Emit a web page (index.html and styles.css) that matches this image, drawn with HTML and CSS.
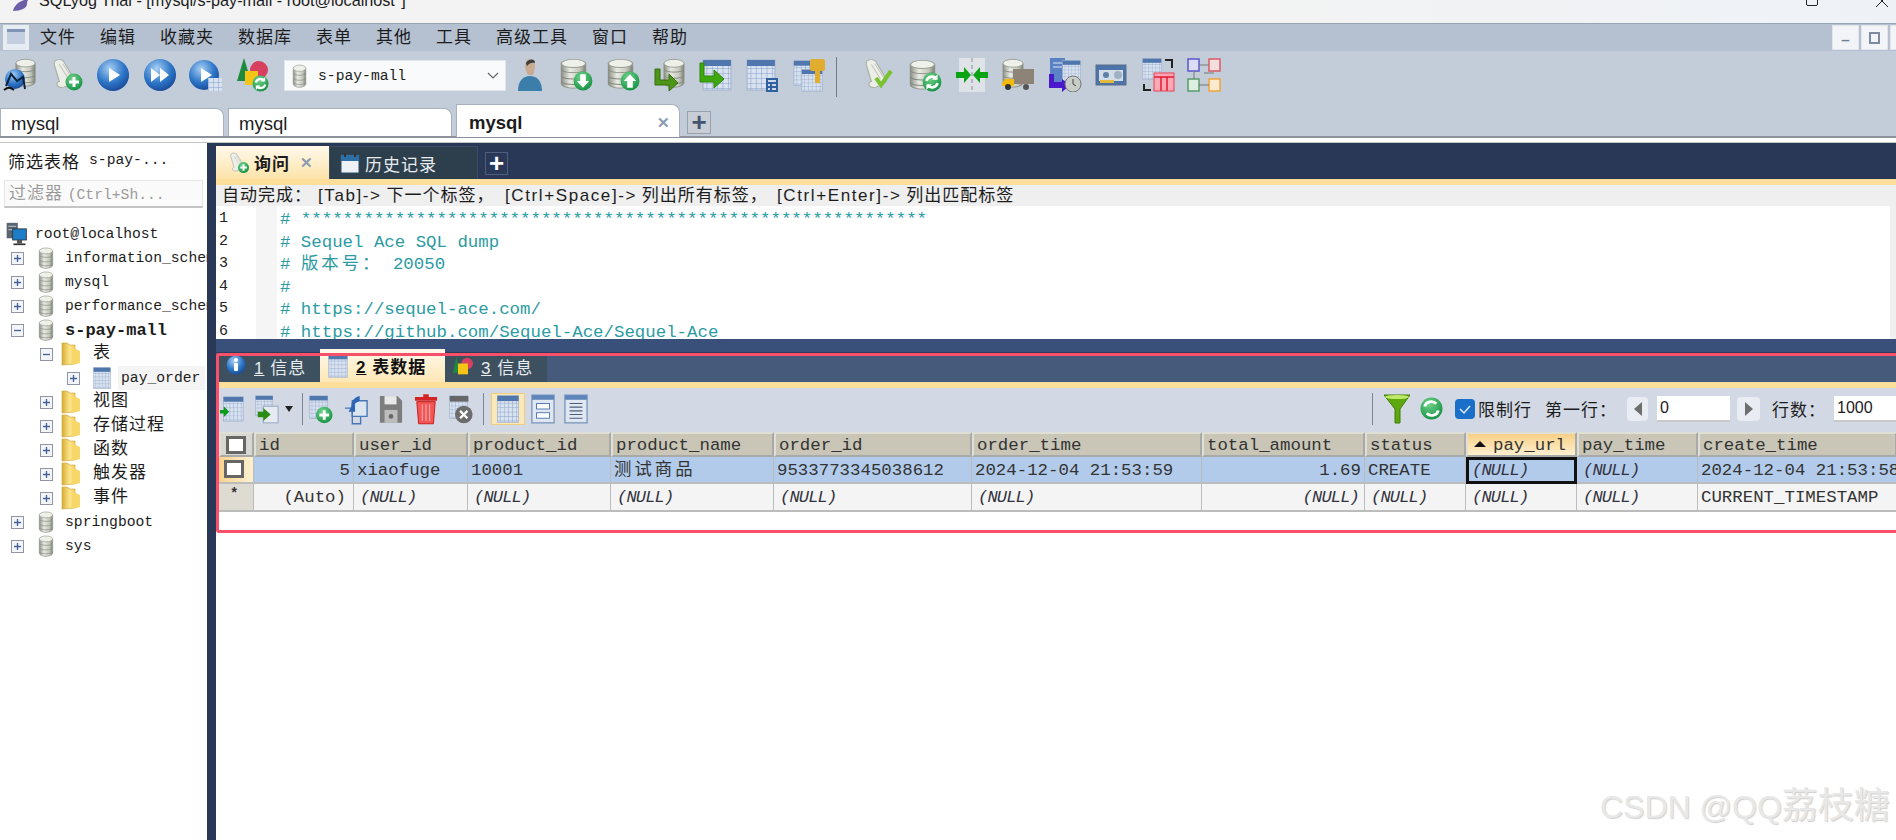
FILE: index.html
```html
<!DOCTYPE html>
<html lang="zh">
<head>
<meta charset="utf-8">
<title>SQLyog Trial</title>
<link rel="stylesheet" href="styles.css">
</head>
<body>
<svg class="sprite" xmlns="http://www.w3.org/2000/svg">
  <defs>
    <linearGradient id="gDb" x1="0" x2="1" y1="0" y2="0"><stop offset="0" stop-color="#8d9186"/><stop offset=".35" stop-color="#e9ebe4"/><stop offset=".75" stop-color="#c5c8bd"/><stop offset="1" stop-color="#7d8178"/></linearGradient>
    <radialGradient id="gBlue" cx=".4" cy=".3" r=".8"><stop offset="0" stop-color="#a8d0f4"/><stop offset=".55" stop-color="#2f77c8"/><stop offset="1" stop-color="#123f8c"/></radialGradient>
    <radialGradient id="gGreen" cx=".4" cy=".3" r=".8"><stop offset="0" stop-color="#6fd48a"/><stop offset="1" stop-color="#0e8a3c"/></radialGradient>
    <linearGradient id="gFolder" x1="0" x2="1" y1="0" y2="0"><stop offset="0" stop-color="#d8ae36"/><stop offset=".6" stop-color="#fbe58c"/><stop offset="1" stop-color="#f2cd57"/></linearGradient>
    <pattern id="pGrid" width="5" height="5" patternUnits="userSpaceOnUse"><rect width="5" height="5" fill="#d9e2f0"/><path d="M5 0V5M0 5H5" stroke="#86a0c8" stroke-width="1"/></pattern>

    <symbol id="db" viewBox="0 0 24 34" preserveAspectRatio="none"><path d="M2 6v22c0 3 5 5 10 5s10-2 10-5V6z" fill="url(#gDb)" stroke="#8b8f84"/><ellipse cx="12" cy="6" rx="10" ry="4.500" fill="#eef0ea" stroke="#9a9e93"/><path d="M2 13c2 4 18 4 20 0M2 20c2 4 18 4 20 0M2 26c2 4 18 4 20 0" fill="none" stroke="#85897e"/></symbol>
    <symbol id="tbl" viewBox="0 0 28 32" preserveAspectRatio="none"><rect x="1" y="1" width="26" height="30" fill="url(#pGrid)" stroke="#a4b4cc"/><rect x="1" y="1" width="26" height="6" fill="#4f76ad"/></symbol>
    <symbol id="scroll" viewBox="0 0 30 34" preserveAspectRatio="none"><path d="M8 2c4-1 6 1 7 4l8 16c1 3-1 5-3 6l-6 3c-3 1-5 0-6-2-1-2 1-4 2-4L6 9C5 6 5 3 8 2z" fill="#eceee8" stroke="#a9ada2"/><path d="M10 7l8 15M13 6l8 15" stroke="#c4c7bd" fill="none"/></symbol>
    <symbol id="plus" viewBox="0 0 18 18"><circle cx="9" cy="9" r="8.500" fill="url(#gGreen)"/><path d="M9 4v10M4 9h10" stroke="#fff" stroke-width="3"/></symbol>
    <symbol id="down" viewBox="0 0 18 18"><circle cx="9" cy="9" r="8.500" fill="url(#gGreen)"/><path d="M6.500 3h5v6h3L9 15 3.500 9h3z" fill="#fff"/></symbol>
    <symbol id="up" viewBox="0 0 18 18"><circle cx="9" cy="9" r="8.500" fill="url(#gGreen)"/><path d="M6.500 15h5V9h3L9 3 3.500 9h3z" fill="#fff"/></symbol>
    <symbol id="sync" viewBox="0 0 18 18"><circle cx="9" cy="9" r="8.500" fill="url(#gGreen)"/><path d="M4 8c1-4 6-5 9-2M14 10c-1 4-6 5-9 2" stroke="#fff" stroke-width="2.400" fill="none"/><path d="M14 2v5H9zM4 16v-5h5z" fill="#fff"/></symbol>

    <symbol id="i-connect" viewBox="0 0 34 34"><use href="#db" x="11" y="0" width="23" height="29"/><circle cx="12" cy="21" r="10" fill="url(#gBlue)"/><path d="M3 28l5-12 6 7 6-4 2 12" fill="none" stroke="#0c2340" stroke-width="2"/><path d="M1 32c4-3 6-3 10 0" stroke="#111" stroke-width="2" fill="none"/></symbol>
    <symbol id="i-newq" viewBox="0 0 34 34"><use href="#scroll" x="-2" y="0" width="34" height="32"/><use href="#plus" x="15" y="15" width="18" height="18"/></symbol>
    <symbol id="i-run" viewBox="0 0 34 34"><circle cx="17" cy="17" r="16" fill="url(#gBlue)"/><path d="M13 10l11 7-11 7z" fill="#fff"/></symbol>
    <symbol id="i-runall" viewBox="0 0 34 34"><circle cx="17" cy="17" r="16" fill="url(#gBlue)"/><path d="M8 10l9 7-9 7zM17 10l9 7-9 7z" fill="#fff"/></symbol>
    <symbol id="i-runtb" viewBox="0 0 34 34"><circle cx="15" cy="17" r="15" fill="url(#gBlue)"/><path d="M12 10l11 7-11 7z" fill="#fff"/><rect x="19" y="20" width="14" height="13" fill="url(#pGrid)"/></symbol>
    <symbol id="i-shapes" viewBox="0 0 34 34"><path d="M8 0l7 23H1z" fill="#1f8a3c"/><circle cx="23" cy="12" r="9" fill="#d8405f"/><rect x="9" y="13" width="13" height="14" fill="#f4c518"/><use href="#sync" x="16" y="17" width="17" height="17"/></symbol>
    <symbol id="i-user" viewBox="0 0 34 34"><path d="M14 2c5-2 9 1 8 6l-1 7c-1 3-6 3-7 0-2-4-3-9 0-13z" fill="#c9ab92"/><path d="M13 5c2-4 9-5 9 0-3-1-6 0-8 3z" fill="#3c3c3c"/><path d="M5 33c0-10 5-15 12-15s12 5 12 15z" fill="#3b7eaa"/></symbol>
    <symbol id="i-dbdown" viewBox="0 0 34 34"><use href="#db" x="0" y="0" width="29" height="31"/><use href="#down" x="14" y="13" width="20" height="20"/></symbol>
    <symbol id="i-dbup" viewBox="0 0 34 34"><use href="#db" x="0" y="0" width="29" height="31"/><use href="#up" x="14" y="13" width="20" height="20"/></symbol>
    <symbol id="i-imp" viewBox="0 0 34 34"><use href="#db" x="10" y="0" width="24" height="30"/><path d="M3 11h5v11h9v-6l9 9-9 8v-6H3z" fill="#4c9618" stroke="#356f0e"/></symbol>
    <symbol id="i-imptb" viewBox="0 0 34 34"><use href="#tbl" x="3" y="1" width="30" height="32"/><path d="M1 5h4v13h10v-6l10 9-10 9v-6H1z" fill="#3fa80f" stroke="#2b8608"/></symbol>
    <symbol id="i-calc" viewBox="0 0 34 34"><use href="#tbl" x="1" y="1" width="30" height="32"/><rect x="21" y="20" width="12" height="14" fill="#2f5f9e"/><path d="M23 23h8M23 27h2M27 27h4M23 31h2M27 31h4" stroke="#fff" stroke-width="1.500"/></symbol>
    <symbol id="i-key" viewBox="0 0 34 34"><use href="#tbl" x="1" y="2" width="24" height="26"/><use href="#tbl" x="9" y="11" width="22" height="23"/><rect x="18" y="1" width="15" height="12" rx="2" fill="#e0ad2e"/><rect x="23" y="12" width="5" height="13" fill="#e0ad2e"/></symbol>
    <symbol id="i-check" viewBox="0 0 34 34"><use href="#scroll" x="-2" y="0" width="34" height="32"/><path d="M14 20l5 7 10-14" stroke="#79c232" stroke-width="4" fill="none"/></symbol>
    <symbol id="i-dbsync" viewBox="0 0 34 34"><use href="#db" x="0" y="1" width="29" height="31"/><use href="#sync" x="14" y="14" width="20" height="20"/></symbol>
    <symbol id="i-sync2" viewBox="0 0 34 34"><rect x="4" y="0" width="26" height="34" fill="#dfe3e8"/><path d="M17 0v34" stroke="#8a9099" stroke-dasharray="4 3"/><path d="M1 14h8V9l7 8-7 8v-5H1zM33 14h-8V9l-7 8 7 8v-5h8z" fill="#0aa314"/></symbol>
    <symbol id="i-truck" viewBox="0 0 34 34"><use href="#db" x="0" y="0" width="24" height="30"/><rect x="12" y="11" width="21" height="15" fill="#8d8477"/><path d="M4 21h9v7H1v-3z" fill="#f2b90f"/><circle cx="7" cy="29" r="3" fill="#333"/><circle cx="25" cy="29" r="3" fill="#555"/></symbol>
    <symbol id="i-sched" viewBox="0 0 34 34"><rect x="2" y="0" width="15" height="24" fill="#5b82c4"/><path d="M5 5h9M5 9h9" stroke="#dce6f5"/><use href="#tbl" x="14" y="2" width="19" height="22"/><path d="M1 16h5v8h8v-3l8 6-8 7v-4H1z" fill="#4a17cc"/><circle cx="25" cy="26" r="8" fill="#c9cdc8" stroke="#777"/><path d="M25 21v5l3 2" stroke="#444" fill="none"/></symbol>
    <symbol id="i-card" viewBox="0 0 34 34"><rect x="2" y="7" width="30" height="20" fill="#4d74a8" stroke="#5b6f88"/><rect x="5" y="12" width="24" height="11" fill="#d3dde8"/><circle cx="12" cy="17" r="3" fill="#5a7fa8"/><rect x="6" y="22" width="14" height="3" fill="#e3ba3c"/><circle cx="24" cy="17" r="4" fill="#9fb2c4"/></symbol>
    <symbol id="i-copy" viewBox="0 0 34 34"><use href="#tbl" x="1" y="0" width="20" height="22"/><rect x="13" y="15" width="20" height="18" fill="#f9a8b4"/><path d="M13 19h20M20 19v14M26 19v14" stroke="#e21a33" stroke-width="1.500"/><rect x="13" y="15" width="20" height="18" fill="none" stroke="#ea3f55"/><path d="M24 2h7v8M3 26v6h7" stroke="#222" stroke-width="2" fill="none"/></symbol>
    <symbol id="i-schema" viewBox="0 0 34 34"><g fill="none" stroke-width="1.500"><rect x="1" y="1" width="11" height="12" fill="#dcdcf4" stroke="#5a58c8"/><rect x="22" y="1" width="11" height="12" fill="#f6dede" stroke="#d65c66"/><rect x="1" y="21" width="11" height="12" fill="#dcefe0" stroke="#5a9c6c"/><rect x="22" y="21" width="11" height="12" fill="#fbeacd" stroke="#f0a33a"/><path d="M12 7h10M12 27h10M7 13v8M17 15h10" stroke="#777" stroke-width="1"/></g></symbol>

    <symbol id="r-load" viewBox="0 0 26 34"><use href="#tbl" x="3" y="3" width="23" height="28"/><path d="M0 18h4v-4l6 6-6 6v-4H0z" fill="#0c9a1c"/></symbol>
    <symbol id="r-export" viewBox="0 0 26 34"><use href="#tbl" x="0" y="2" width="20" height="23"/><rect x="9" y="14" width="16" height="18" fill="#e6ebf2" stroke="#8ea2bf"/><path d="M3 20h6v-4l8 7-8 7v-4H3z" fill="#2c8c12"/></symbol>
    <symbol id="r-add" viewBox="0 0 26 34"><use href="#tbl" x="0" y="2" width="21" height="26"/><use href="#plus" x="7" y="14" width="19" height="19"/></symbol>
    <symbol id="r-dup" viewBox="0 0 26 34"><path d="M9 8h16v17H9z" fill="#dbe4f1" stroke="#4a76b5" stroke-width="1.500"/><path d="M1 16h8v17h9v-8" fill="none" stroke="#4a76b5" stroke-width="1.500"/><path d="M8 14c0-6 4-10 9-11v5l-5 3v9H5z" fill="#2d66b4"/></symbol>
    <symbol id="r-save" viewBox="0 0 26 34"><path d="M1 3h19l5 5v24H1z" fill="#7d7d7d"/><rect x="6" y="3" width="13" height="9" fill="#e8e8e8"/><rect x="6" y="18" width="14" height="14" fill="#bdbdbd"/><circle cx="13" cy="25" r="2.500" fill="#666"/></symbol>
    <symbol id="r-del" viewBox="0 0 26 34"><path d="M10 1h6v3h9v4H1V4h9z" fill="#d32323"/><path d="M3 9h20l-2 24H5z" fill="#f35454" stroke="#c41919"/><path d="M9 12v18M13 12v18M17 12v18" stroke="#fbb"/></symbol>
    <symbol id="r-clear" viewBox="0 0 26 34"><use href="#tbl" x="0" y="2" width="21" height="26"/><rect x="1" y="3" width="20" height="6" fill="#666"/><circle cx="16" cy="23" r="9.500" fill="#6c6c6c"/><path d="M12 19l8 8M20 19l-8 8" stroke="#fff" stroke-width="2.500"/></symbol>
    <symbol id="r-grid" viewBox="0 0 26 34"><use href="#tbl" x="0" y="1" width="26" height="32"/></symbol>
    <symbol id="r-form" viewBox="0 0 26 34"><rect x="1" y="2" width="24" height="30" fill="#e0e7f1" stroke="#7f99be" stroke-width="1.500"/><rect x="1" y="2" width="24" height="5" fill="#5f86bb"/><rect x="6" y="11" width="14" height="6" fill="#fff" stroke="#4a76b5"/><rect x="6" y="21" width="14" height="6" fill="#fff" stroke="#4a76b5"/></symbol>
    <symbol id="r-text" viewBox="0 0 26 34"><rect x="1" y="2" width="24" height="30" fill="#e0e7f1" stroke="#7f99be" stroke-width="1.500"/><rect x="1" y="2" width="24" height="5" fill="#5f86bb"/><path d="M6 11h14M6 15h14M6 19h14M6 23h14M6 27h14" stroke="#4a5f80" stroke-width="1.200"/></symbol>
    <symbol id="r-filter" viewBox="0 0 26 30"><path d="M0 1h26L16 15v14h-5V15z" fill="#5ea80f" stroke="#3f7d08"/><ellipse cx="13" cy="3" rx="12" ry="2" fill="#bfe866"/></symbol>
    <symbol id="r-refresh" viewBox="0 0 24 28"><circle cx="12" cy="14" r="11.500" fill="url(#gGreen)"/><path d="M5 12c1-5 8-7 12-3M19 16c-1 5-8 7-12 3" stroke="#fff" stroke-width="3" fill="none"/></symbol>
    <symbol id="t-info" viewBox="0 0 20 22"><circle cx="10" cy="10" r="9.500" fill="url(#gBlue)"/><circle cx="10" cy="5" r="2" fill="#fff"/><rect x="8" y="8" width="4" height="8" rx="1" fill="#fff"/></symbol>
    <symbol id="t-shapes" viewBox="0 0 24 24"><path d="M4 1l4 19H0z" fill="#1f8a3c"/><circle cx="17" cy="9" r="7" fill="#d8405f"/><rect x="6" y="9" width="12" height="13" fill="#f4c518"/></symbol>
    <symbol id="expp" viewBox="0 0 13 13"><rect x=".5" y=".5" width="12" height="12" fill="#f3f5f9" stroke="#8e96a6"/><path d="M6.500 3v7M3 6.500h7" stroke="#3f5f96" stroke-width="1.300"/></symbol>
    <symbol id="expm" viewBox="0 0 13 13"><rect x=".5" y=".5" width="12" height="12" fill="#f3f5f9" stroke="#8e96a6"/><path d="M3 6.500h7" stroke="#3f5f96" stroke-width="1.300"/></symbol>
    <symbol id="folder" viewBox="0 0 20 24"><path d="M1 1h5l3 2h5v19l-13 1z" fill="url(#gFolder)" stroke="#c9a130" stroke-width=".6"/><path d="M11 5l8 4v12l-8 2z" fill="#f7d768"/></symbol>
    <symbol id="server" viewBox="0 0 25 28"><rect x="1" y="1" width="13" height="18" fill="#5a6472"/><path d="M3 5h9M3 9h9" stroke="#cfd6df"/><rect x="8" y="8" width="16" height="13" fill="#1c7ec9" stroke="#333"/><path d="M13 21h6v4h-6z" fill="#555"/><path d="M9 26h14" stroke="#333" stroke-width="2"/></symbol>
    <symbol id="dolphin" viewBox="0 0 18 12"><path d="M1 12C2 7 7 1 17 0c-2 2-2 3-2 5 0 4-6 7-14 7z" fill="#6c5fa8"/></symbol>
    <symbol id="cal" viewBox="0 0 20 22"><rect x="1" y="3" width="18" height="18" fill="#eef2f6" stroke="#2e4d66"/><rect x="1" y="3" width="18" height="6" fill="#2d6ea3"/><path d="M5 1v4M15 1v4" stroke="#333" stroke-width="2"/></symbol>
  </defs>
</svg>

<header class="titlebar">
  <svg class="ic-dolphin"><use href="#dolphin"/></svg>
  <span class="title-text">SQLyog Trial - [mysql/s-pay-mall - root@localhost*]</span>
  <span class="win-restore"></span>
  <span class="win-close"></span>
</header>

<nav class="menubar">
  <span class="mdi-icon"><i></i></span>
  <div class="menus cn">
    <span>文件</span><span>编辑</span><span>收藏夹</span><span>数据库</span><span>表单</span><span>其他</span><span>工具</span><span>高级工具</span><span>窗口</span><span>帮助</span>
  </div>
  <div class="mdi-btns">
    <span class="mdi-btn">&#8211;</span>
    <span class="mdi-btn"><i class="mini-restore"></i></span>
    <span class="mdi-btn"></span>
  </div>
</nav>

<div class="toolbar">
  <svg class="ti"><use href="#i-connect"/></svg>
  <svg class="ti"><use href="#i-newq"/></svg>
  <svg class="ti"><use href="#i-run"/></svg>
  <svg class="ti"><use href="#i-runall"/></svg>
  <svg class="ti"><use href="#i-runtb"/></svg>
  <svg class="ti"><use href="#i-shapes"/></svg>
  <div class="combo">
    <svg class="combo-db"><use href="#db"/></svg>
    <span class="mono-s">s-pay-mall</span>
    <svg class="combo-chev" viewBox="0 0 12 8"><path d="M1 1l5 5 5-5" fill="none" stroke="#666" stroke-width="1.200"/></svg>
  </div>
  <svg class="ti"><use href="#i-user"/></svg>
  <svg class="ti"><use href="#i-dbdown"/></svg>
  <svg class="ti"><use href="#i-dbup"/></svg>
  <svg class="ti"><use href="#i-imp"/></svg>
  <svg class="ti"><use href="#i-imptb"/></svg>
  <svg class="ti"><use href="#i-calc"/></svg>
  <svg class="ti"><use href="#i-key"/></svg>
  <span class="tb-sep"></span>
  <svg class="ti"><use href="#i-check"/></svg>
  <svg class="ti"><use href="#i-dbsync"/></svg>
  <svg class="ti"><use href="#i-sync2"/></svg>
  <svg class="ti"><use href="#i-truck"/></svg>
  <svg class="ti"><use href="#i-sched"/></svg>
  <svg class="ti"><use href="#i-card"/></svg>
  <svg class="ti"><use href="#i-copy"/></svg>
  <svg class="ti"><use href="#i-schema"/></svg>
</div>

<div class="doctabs">
  <div class="doctab">mysql</div>
  <div class="doctab">mysql</div>
  <div class="doctab active">mysql<span class="doc-x">&#10005;</span></div>
  <div class="doc-plus">+</div>
</div>
<div class="doc-gap"></div>

<div class="workspace">
  <aside class="side">
    <div class="side-head"><span class="cn">筛选表格</span><span class="mono-s">s-pay-...</span></div>
    <div class="side-filter"><span class="cn">过滤器</span> <span class="mono-s">(Ctrl+Sh...</span></div>
    <ul class="tree">
      <li class="node root"><svg class="ic-server"><use href="#server"/></svg><span class="nt">root@localhost</span></li>
      <li class="node l0"><svg class="exp"><use href="#expp"/></svg><svg class="ic-db"><use href="#db"/></svg><span class="nt">information_schema</span></li>
      <li class="node l0"><svg class="exp"><use href="#expp"/></svg><svg class="ic-db"><use href="#db"/></svg><span class="nt">mysql</span></li>
      <li class="node l0"><svg class="exp"><use href="#expp"/></svg><svg class="ic-db"><use href="#db"/></svg><span class="nt">performance_schema</span></li>
      <li class="node l0"><svg class="exp"><use href="#expm"/></svg><svg class="ic-db"><use href="#db"/></svg><span class="nt bold">s-pay-mall</span></li>
      <li class="node l1"><svg class="exp"><use href="#expm"/></svg><svg class="ic-folder"><use href="#folder"/></svg><span class="nt cn">表</span></li>
      <li class="node l2"><svg class="exp"><use href="#expp"/></svg><svg class="ic-table"><use href="#tbl"/></svg><span class="nt picked">pay_order</span></li>
      <li class="node l1"><svg class="exp"><use href="#expp"/></svg><svg class="ic-folder"><use href="#folder"/></svg><span class="nt cn">视图</span></li>
      <li class="node l1"><svg class="exp"><use href="#expp"/></svg><svg class="ic-folder"><use href="#folder"/></svg><span class="nt cn">存储过程</span></li>
      <li class="node l1"><svg class="exp"><use href="#expp"/></svg><svg class="ic-folder"><use href="#folder"/></svg><span class="nt cn">函数</span></li>
      <li class="node l1"><svg class="exp"><use href="#expp"/></svg><svg class="ic-folder"><use href="#folder"/></svg><span class="nt cn">触发器</span></li>
      <li class="node l1"><svg class="exp"><use href="#expp"/></svg><svg class="ic-folder"><use href="#folder"/></svg><span class="nt cn">事件</span></li>
      <li class="node l0"><svg class="exp"><use href="#expp"/></svg><svg class="ic-db"><use href="#db"/></svg><span class="nt">springboot</span></li>
      <li class="node l0"><svg class="exp"><use href="#expp"/></svg><svg class="ic-db"><use href="#db"/></svg><span class="nt">sys</span></li>
    </ul>
  </aside>
  <div class="splitter"></div>
  <main class="main">
    <div class="qtabs">
      <div class="qtab active"><svg class="qtab-ic"><use href="#i-newq"/></svg><b class="cn">询问</b><span class="q-x">&#10005;</span></div>
      <div class="qtab dark"><svg class="qtab-cal"><use href="#cal"/></svg><span class="cn">历史记录</span></div>
      <div class="q-plus">+</div>
    </div>
    <div class="stripe"></div>
    <div class="hint">
      <span class="cn h1">自动完成：</span>
      <span class="h2"><span class="hk">[Tab]-&gt;</span> <span class="cn">下一个标签，</span></span>
      <span class="h3"><span class="hk">[Ctrl+Space]-&gt;</span> <span class="cn">列出所有标签，</span></span>
      <span class="h4"><span class="hk">[Ctrl+Enter]-&gt;</span> <span class="cn">列出匹配标签</span></span>
    </div>
    <div class="editor">
      <div class="gutter"><span>1</span><span>2</span><span>3</span><span>4</span><span>5</span><span>6</span></div>
      <div class="stipple"></div>
      <div class="code">
        <div># ************************************************************</div>
        <div># Sequel Ace SQL dump</div>
        <div># <span class="wide">版本号：</span> 20050</div>
        <div>#</div>
        <div># https://sequel-ace.com/</div>
        <div># https://github.com/Sequel-Ace/Sequel-Ace</div>
      </div>
      <div class="ed-scroll"></div>
    </div>
    <div class="divider"></div>
    <section class="result">
      <div class="rtabs">
        <div class="rtab"><svg class="rt-ic"><use href="#t-info"/></svg><span class="cn"><u>1</u> 信息</span></div>
        <div class="rtab active"><svg class="rt-ic"><use href="#tbl"/></svg><b class="cn"><u>2</u> 表数据</b></div>
        <div class="rtab"><svg class="rt-ic"><use href="#t-shapes"/></svg><span class="cn"><u>3</u> 信息</span></div>
      </div>
      <div class="stripe"></div>
      <div class="rtools">
        <svg class="ri first"><use href="#r-load"/></svg>
        <svg class="ri"><use href="#r-export"/></svg>
        <span class="caret"></span>
        <span class="rsep s1"></span>
        <svg class="ri tight"><use href="#r-add"/></svg>
        <svg class="ri"><use href="#r-dup"/></svg>
        <svg class="ri"><use href="#r-save"/></svg>
        <svg class="ri"><use href="#r-del"/></svg>
        <svg class="ri"><use href="#r-clear"/></svg>
        <span class="rsep s2"></span>
        <span class="view-on"><svg class="ri-in"><use href="#r-grid"/></svg></span>
        <svg class="ri v2"><use href="#r-form"/></svg>
        <svg class="ri v3"><use href="#r-text"/></svg>
        <div class="rright">
          <span class="rsep"></span>
          <svg class="r-filter"><use href="#r-filter"/></svg>
          <svg class="r-refresh"><use href="#r-refresh"/></svg>
          <span class="limit-check"><svg viewBox="0 0 20 20"><path d="M5 10l4 4 6-7" fill="none" stroke="#dfeafa" stroke-width="1.500"/></svg></span>
          <span class="cn lb-limit">限制行</span>
          <span class="cn lb-first">第一行：</span>
          <span class="pg prev"></span>
          <span class="num n1">0</span>
          <span class="pg next"></span>
          <span class="cn lb-rows">行数：</span>
          <span class="num n2">1000</span>
        </div>
      </div>
      <div class="grid">
        <div class="hd mark"><i class="box"></i></div>
        <div class="hd">id</div><div class="hd">user_id</div><div class="hd">product_id</div><div class="hd">product_name</div><div class="hd">order_id</div><div class="hd">order_time</div><div class="hd">total_amount</div><div class="hd">status</div>
        <div class="hd sorted"><i class="tri"></i>pay_url</div><div class="hd">pay_time</div><div class="hd">create_time</div>

        <div class="c mark cur"><i class="box"></i></div>
        <div class="c sel num-r">5</div><div class="c sel">xiaofuge</div><div class="c sel">10001</div><div class="c sel"><span class="wide">测试商品</span></div><div class="c sel">9533773345038612</div><div class="c sel">2024-12-04 21:53:59</div><div class="c sel num-r">1.69</div><div class="c sel">CREATE</div>
        <div class="c sel focus"><em>(NULL)</em></div><div class="c sel"><em>(NULL)</em></div><div class="c sel">2024-12-04 21:53:58</div>

        <div class="c mark star">*</div>
        <div class="c new num-r auto">(Auto)</div><div class="c new"><em>(NULL)</em></div><div class="c new"><em>(NULL)</em></div><div class="c new"><em>(NULL)</em></div><div class="c new"><em>(NULL)</em></div><div class="c new"><em>(NULL)</em></div><div class="c new num-r"><em>(NULL)</em></div><div class="c new"><em>(NULL)</em></div>
        <div class="c new"><em>(NULL)</em></div><div class="c new"><em>(NULL)</em></div><div class="c new">CURRENT_TIMESTAMP</div>
      </div>
      <div class="red-box"></div>
    </section>
  </main>
</div>
<div class="watermark">CSDN @QQ<span class="wm-cn">荔枝糖</span></div>
</body>
</html>
```
FILE: styles.css
```css
* { box-sizing: border-box; }
html, body { margin: 0; padding: 0; }
body {
  width: 1896px; height: 840px; overflow: hidden; position: relative;
  background: #fff; color: #1c1c1c;
  font-family: "Liberation Sans", "Noto Sans CJK SC", sans-serif; font-size: 17px;
}
.sprite { position: absolute; width: 0; height: 0; }
svg { display: block; flex: none; }
.cn { font-family: "Liberation Sans", "Noto Sans CJK SC", sans-serif; font-size: 17px; letter-spacing: 1px; }
.mono-s { font-family: "Liberation Mono", "Noto Sans CJK SC", monospace; font-size: 14.700px; }

/* title */
.titlebar { height: 23px; display: flex; align-items: flex-start; overflow: hidden; background: linear-gradient(90deg, #f3f3f3 0 65%, #eef2f7 100%); padding-left: 12px; }
.ic-dolphin { width: 18px; height: 12px; margin-top: -1px; }
.title-text { margin: -10px 0 0 9px; font-size: 16.200px; line-height: 20px; white-space: nowrap; }
.win-restore { margin: -8px 0 0 auto; width: 12px; height: 14px; border: 1.500px solid #222; border-radius: 2px; }
.win-close { margin: -5px 8px 0 58px; width: 12px; height: 12px; background: linear-gradient(45deg, transparent 46%, #222 46% 54%, transparent 54%), linear-gradient(-45deg, transparent 46%, #222 46% 54%, transparent 54%); }

/* menu */
.menubar { height: 28px; display: flex; align-items: center; background: #b5c1d1; border-top: 1px solid #9aa5b4; padding-left: 3px; }
.mdi-icon { width: 26px; height: 25px; background: #e7ecf2; padding: 4px; flex: none; }
.mdi-icon i { display: block; width: 18px; height: 15px; background: #c3cfdf; border-top: 3px solid #7f94b3; }
.menus { display: flex; gap: 24px; margin-left: 11px; line-height: 27px; }
.mdi-btns { margin-left: auto; display: flex; gap: 2px; margin-right: -21px; flex: none; }
.mdi-btn { width: 27px; height: 25px; background: #f2f4f7; border: 1px solid #e2e6ec; color: #6f7f95; font-weight: 700; text-align: center; line-height: 28px; font-size: 15px; flex: none; }
.mini-restore { display: block; width: 11px; height: 12px; margin: 6px auto; border: 2px solid #7c8ba0; }

/* main toolbar */
.toolbar { height: 54px; display: flex; align-items: flex-start; gap: 12.500px; padding: 7px 0 0 3px; background: #c3cdda; }
.ti { width: 34px; height: 34px; }
.combo { width: 222px; height: 31px; margin: 2px -6px 0 2px; background: #f9fafb; border: 1px solid #e3e7ec; display: flex; align-items: center; padding-left: 7px; }
.combo-db { width: 15px; height: 24px; margin-right: 11px; }
.combo-chev { width: 12px; height: 8px; margin-left: auto; margin-right: 6px; }
.tb-sep { width: 1px; height: 40px; margin: -1px 12px 0 -2px; background: #6f7c8d; flex: none; }

/* doc tabs */
.doctabs { height: 33px; display: flex; align-items: flex-end; gap: 4px; background: #c3cdda; border-bottom: 2px solid #8b929c; }
.doctab { width: 224px; height: 28px; background: #fff; border-radius: 0 8px 0 0; border: 1px solid #a9b1bd; border-bottom: 0; padding-left: 10px; font-size: 18.500px; line-height: 29px; }
.doctab.active { height: 33px; font-weight: 700; margin-bottom: -1px; line-height: 35px; padding-left: 12px; display: flex; justify-content: space-between; padding-right: 9px; }
.doc-x { color: #8b9ab0; font-size: 15px; font-weight: 700; }
.doc-plus { width: 24px; height: 23px; margin: 0 0 2px 3px; background: #c9ced6; border: 1px solid #98a2af; text-align: center; font-size: 26px; line-height: 20px; color: #44566f; font-weight: 700; }
.doc-gap { height: 5px; background: #fff; border-bottom: 1px solid #c3c3c3; }

/* workspace */
.workspace { display: flex; height: 697px; }
.side { width: 207px; flex: none; background: #fff; overflow: hidden; }
.splitter { width: 9px; flex: none; background: #2a3857; }
.main { flex: 1; min-width: 0; background: #fff; }

.side-head { height: 37px; padding: 0 0 3px 8px; display: flex; align-items: center; gap: 9px; white-space: nowrap; }
.side-filter { width: 199px; height: 28px; margin-left: 4px; background: #fafafa; border: 1px solid #e6e6e6; border-bottom: 2px solid #c4c4c4; color: #9a9a9a; padding-left: 4px; line-height: 26px; white-space: nowrap; overflow: hidden; }
.tree { list-style: none; margin: 14px 0 0; padding: 0; }
.node { height: 24px; display: flex; align-items: center; white-space: nowrap; }
.nt { font-family: "Liberation Mono", monospace; font-size: 14.700px; }
.nt.cn { font-family: "Liberation Sans", "Noto Sans CJK SC", sans-serif; font-size: 17px; padding-bottom: 3px; line-height: 20px; }
.bold { font-weight: 700; font-size: 17px; }
.exp { width: 13px; height: 13px; }
.root { padding-left: 4px; }
.ic-server { width: 25px; height: 24px; margin-right: 6px; }
.l0 { padding-left: 11px; }
.l1 { padding-left: 40px; }
.l2 { padding-left: 67px; }
.ic-db { width: 16px; height: 22px; margin: 0 11px 0 14px; }
.ic-folder { width: 20px; height: 24px; margin: 0 12px 0 8px; }
.ic-table { width: 18px; height: 22px; margin: 0 7px 0 13px; }
.picked { background: #f4f4f4; padding-left: 3px; width: 87px; line-height: 24px; }

/* query area */
.qtabs { height: 36px; background: #2a3857; display: flex; align-items: flex-end; }
.qtab { height: 33px; display: flex; align-items: center; }
.qtab.active { width: 113px; padding-left: 12px; background: linear-gradient(#fff9ec, #fde3a8); }
.qtab-ic { width: 22px; height: 26px; margin-right: 4px; }
.qtab.dark { width: 149px; padding-left: 10px; background: #2d3f4d; border: 1px solid #3c4d63; border-bottom: 0; color: #e8ecef; }
.qtab-cal { width: 20px; height: 22px; margin-right: 5px; }
.q-x { margin-left: 10px; color: #8b9ab0; font-size: 15px; font-weight: 700; }
.q-plus { width: 23px; height: 23px; margin: 0 0 4px 7px; border: 1px solid #4f5e7c; color: #fff; text-align: center; font-size: 26px; line-height: 20px; font-weight: 700; }
.stripe { height: 6px; background: #fddf9b; }
.hint { height: 21px; background: #efefef; display: flex; white-space: nowrap; line-height: 21px; padding-left: 6px; overflow: hidden; }
.hk { letter-spacing: 1.600px; font-size: 17px; }
.h1 { width: 96px; }
.h2 { width: 187px; }
.h3 { width: 272px; }
.editor { height: 133px; display: flex; background: #fff; overflow: hidden; }
.gutter { width: 40px; flex: none; display: flex; flex-direction: column; padding: 2px 0 0 3px; font-family: "Liberation Mono", monospace; font-size: 15px; color: #222; }
.gutter span { height: 22.600px; line-height: 22px; flex: none; }
.stipple { width: 21px; flex: none; background: #f5f5f5; }
.code { flex: 1; padding: 3px 0 0 3px; font-family: "Liberation Mono", "Noto Sans CJK SC", monospace; font-size: 17.400px; color: #2b9ba3; }
.code div { height: 22.600px; line-height: 22px; white-space: pre; }
.wide { letter-spacing: 3px; }
.ed-scroll { width: 6px; flex: none; background: #f0f0f0; }
.divider { height: 9px; background: #38507a; }

/* result */
.result { position: relative; background: #fff; height: 197px; overflow: hidden; }
.rtabs { height: 34px; background: linear-gradient(#38507a 0 4px, #2b3c5c 4px 5px, #465a7c 5px); display: flex; align-items: flex-end; padding-left: 2px; }
.rtab { width: 102px; height: 28px; background: #3d5060; color: #e8ecef; display: flex; align-items: center; padding: 0 0 4px 8px; }
.rtab.active { width: 125px; height: 33px; padding-top: 4px; background: linear-gradient(#fff9ec, #fde7b5); color: #111; }
.rt-ic { width: 20px; height: 24px; margin-right: 8px; }
.rtab u { font-size: 17px; }
.rtools { height: 44px; background: #d2d9e4; display: flex; align-items: center; overflow: hidden; padding-bottom: 3px; }
.ri { width: 24px; height: 32px; margin-left: 11px; }
.ri.first { margin-left: 4px; }
.caret { width: 0; height: 0; margin-left: 6px; border: 4.500px solid transparent; border-top: 6px solid #222; border-bottom: 0; flex: none; }
.rsep { width: 1px; height: 32px; background: #7d8897; flex: none; }
.rsep.s1 { margin-left: 9px; }
.rsep.s2 { margin-left: 10px; }
.ri.tight { margin-left: 6px; }
.view-on { width: 34px; height: 32px; margin-left: 7px; background: #fbe8b8; border: 1px solid #f0cd80; padding: 0 4px; flex: none; }
.ri-in { width: 24px; height: 30px; }
.ri.v2 { margin-left: 6px; }
.ri.v3 { margin-left: 9px; }
.rright { margin-left: auto; width: 524px; flex: none; display: flex; align-items: center; white-space: nowrap; }
.r-filter { width: 26px; height: 30px; margin-left: 11px; }
.r-refresh { width: 23px; height: 27px; margin-left: 10px; }
.limit-check { width: 20px; height: 20px; margin-left: 12px; background: #1a6fc9; border-radius: 4px; flex: none; }
.lb-limit { width: 59px; margin-left: 3px; }
.lb-first { width: 82px; margin-left: 8px; }
.pg { width: 21px; height: 24px; background: #e9edf3; border-radius: 4px; display: flex; align-items: center; justify-content: center; flex: none; }
.prev::before { content: ""; border: 7px solid transparent; border-right: 8px solid #6e6e6e; border-left: 0; }
.next::before { content: ""; border: 7px solid transparent; border-left: 8px solid #6e6e6e; border-right: 0; }
.next { margin-left: 7px; width: 23px; }
.num { height: 26px; background: #fff; border-bottom: 2px solid #c9c9c9; font-size: 16px; line-height: 24px; padding-left: 3px; flex: none; }
.n1 { width: 73px; margin-left: 9px; }
.n2 { width: 62px; }
.lb-rows { width: 62px; margin-left: 12px; }

.grid { display: grid; grid-template-columns: 35px 100px 114px 143px 163px 198px 230px 163px 101px 111px 121px 199px; grid-template-rows: 25px 27px 28px; margin-left: 3px; font-family: "Liberation Mono", "Noto Sans CJK SC", monospace; font-size: 17.400px; }
.hd { background: #c9c6b7; border: 2px solid #e0dfd6; border-right-color: #a9a9a9; border-bottom-color: #a9a9a9; padding: 1px 0 0 3px; line-height: 21px; white-space: nowrap; overflow: hidden; color: #333; }
.hd.mark { background: #d8d8d2; padding: 2px 0 0 5px; }
.box { display: block; width: 20px; height: 18px; background: #fff; border: 3px solid #666; }
.sorted { background: linear-gradient(#f8cf86, #fdf0cf); padding-left: 6px; }
.tri { display: inline-block; border: 6px solid transparent; border-bottom: 6px solid #111; border-top: 0; margin-right: 7px; vertical-align: 3px; }
.c { border-right: 1px solid #bcbcbc; border-bottom: 2px solid #bcbcbc; padding: 2px 3px 0; white-space: nowrap; overflow: hidden; line-height: 23px; color: #333; }
.c.mark { padding: 3px 0 0 5px; background: #dedcd2; }
.c.cur { background: linear-gradient(90deg, #f8d28d, #fdf1d2); }
.sel { background: #b2cbeb; }
.new { background: #f4f4f4; }
.c em { font-size: 17px; letter-spacing: -.8px; padding-left: 3px; color: #33333f; }
.num-r { text-align: right; }
.num-r em { padding: 0 2px 0 0; }
.auto { padding-right: 7px; }
.focus { border: 3px solid #111; padding: 0; line-height: 22px; }
.star { font-size: 14px; color: #333; font-weight: 700; line-height: 14px; padding-left: 11px !important; }
.red-box { position: absolute; left: 0; top: 5px; width: 1700px; height: 180px; border: 3px solid #f8506a; border-radius: 3px; pointer-events: none; }

.watermark { position: absolute; left: 1600px; top: 786px; font-size: 32px; line-height: 40px; color: #e8e8e8; text-shadow: 1px 1px 1px #d0d0d0; white-space: nowrap; font-family: "Liberation Sans", "Noto Sans CJK SC", sans-serif; }
.wm-cn { font-size: 36px; }
```
